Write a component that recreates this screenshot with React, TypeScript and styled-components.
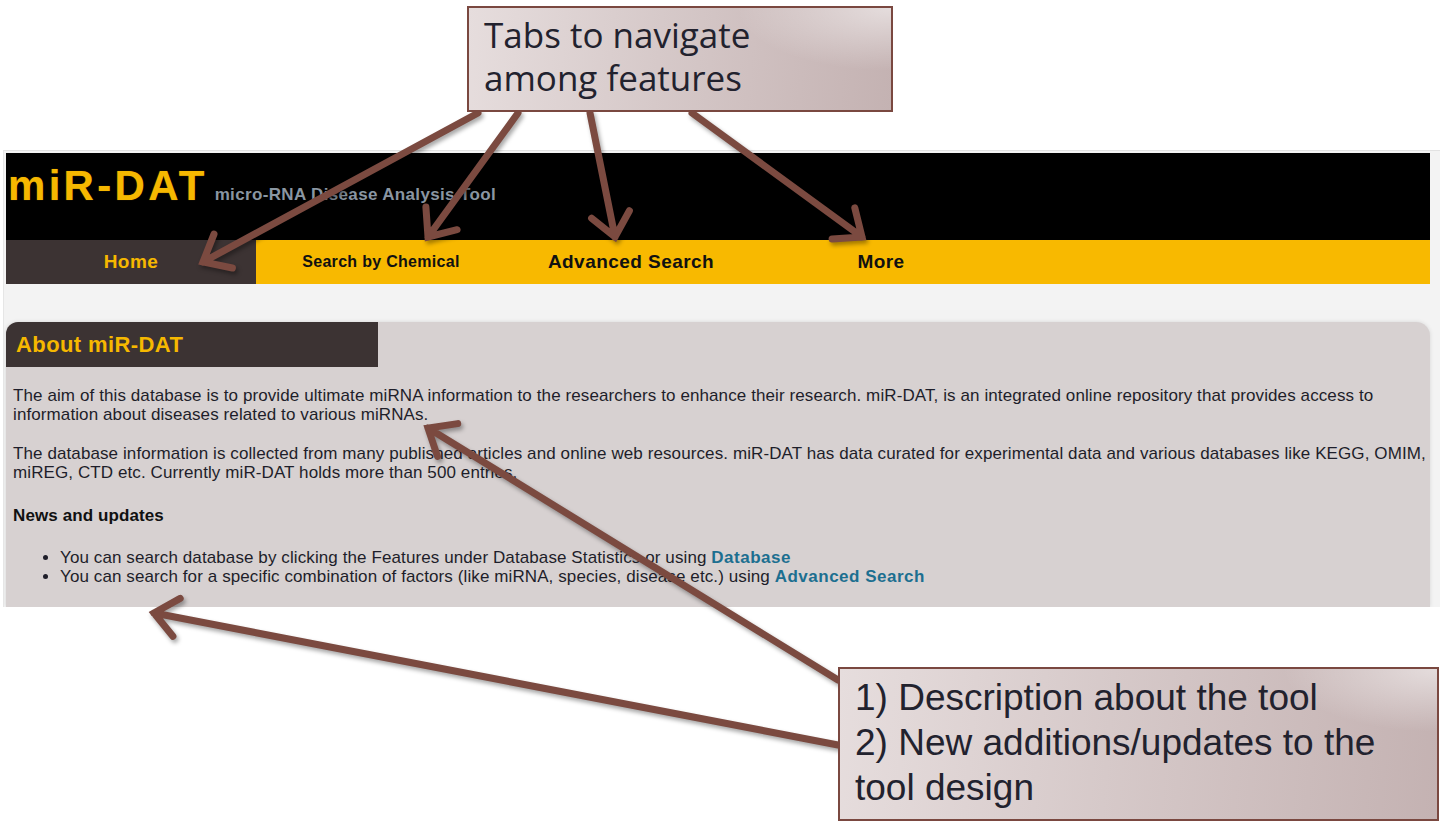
import React from "react";
import styled, { createGlobalStyle } from "styled-components";

const Global = createGlobalStyle`
  html, body { margin: 0; padding: 0; background: #ffffff; }
  body { font-family: "Liberation Sans", Arial, sans-serif; }
`;

const Page = styled.div`
  position: relative;
  width: 1440px;
  height: 822px;
  overflow: hidden;
  background: #ffffff;
  padding-top: 150px;
  box-sizing: border-box;
`;

const Shot = styled.div`
  margin-left: 3px;
  height: 457px;
  overflow: hidden;
  background: #f3f3f3;
  border-top: 1px solid #e2e2e2;
  border-left: 1px solid #e6e6e6;
  padding: 2px 10px 0 2px;
  box-sizing: border-box;
  display: flex;
  flex-direction: column;
`;

const Header = styled.header`
  height: 87px;
  background: #000000;
  display: flex;
  flex-direction: column;
  justify-content: flex-end;
  padding: 0 0 33px 2px;
  box-sizing: border-box;
`;

const Brand = styled.div`
  display: flex;
  align-items: baseline;
  gap: 7px;
`;

const Logo = styled.div`
  font-family: "Liberation Sans", Arial, sans-serif;
  font-weight: 700;
  font-size: 42px;
  letter-spacing: 3.3px;
  line-height: 1;
  color: #f6b800;
  text-shadow: 0 0 1px #7a5200;
`;

const Subtitle = styled.div`
  font-family: "Liberation Sans", Arial, sans-serif;
  font-weight: 700;
  font-size: 17px;
  letter-spacing: 0.35px;
  line-height: 1;
  color: #8a96a2;
`;

const Nav = styled.nav`
  height: 44px;
  background: #f8b900;
  display: flex;
`;

const Tab = styled.div<{ $active?: boolean; $small?: boolean }>`
  width: 250px;
  display: flex;
  align-items: center;
  justify-content: center;
  font-family: "Liberation Sans", Arial, sans-serif;
  font-weight: 700;
  font-size: ${(p) => (p.$small ? "16px" : "19px")};
  letter-spacing: ${(p) => (p.$small ? "0.3px" : "0.45px")};
  color: ${(p) => (p.$active ? "#f6b800" : "#111111")};
  background: ${(p) => (p.$active ? "#3c3333" : "transparent")};
`;

const Panel = styled.section`
  margin-top: 38px;
  flex: 1;
  background: #d7d1d1;
  border-radius: 12px 14px 0 0;
  box-shadow: 0 0 4px rgba(0, 0, 0, 0.12);
  font-size: 17px;
  letter-spacing: 0.1px;
  color: #1e1e2a;
`;

const PanelTitle = styled.h2`
  margin: 0;
  width: 372px;
  height: 45px;
  box-sizing: border-box;
  padding-left: 10px;
  display: flex;
  align-items: center;
  background: #3c3333;
  color: #f6b800;
  font-size: 22px;
  letter-spacing: 0.4px;
  font-weight: 700;
  border-radius: 12px 0 0 0;
`;

const PanelBody = styled.div`
  padding: 19px 3px 0 7px;
`;

const Para = styled.p`
  margin: 0 0 20px;
  line-height: 19px;
`;

const SubHead = styled.h4`
  margin: 24px 0 23px;
  font-size: 17px;
  line-height: 19px;
  font-weight: 700;
  color: #111;
`;

const List = styled.ul`
  margin: 0;
  padding-left: 47px;
  line-height: 19px;
`;

const Link = styled.a`
  color: #1c6f90;
  font-weight: 700;
  letter-spacing: 0.5px;
  text-decoration: none;
`;

const Callout = styled.div<{ $font: string; $size: number; $lh: number }>`
  position: absolute;
  box-sizing: border-box;
  border: 2px solid #7a4840;
  background:
    radial-gradient(ellipse 220px 90px at 100% 0%, rgba(255, 255, 255, 0.55), rgba(255, 255, 255, 0) 70%),
    linear-gradient(95deg, #e6dddd 0%, #d6c9c9 45%, #c4b2b2 100%);
  font-family: ${(p) => p.$font};
  font-size: ${(p) => p.$size}px;
  line-height: ${(p) => p.$lh}px;
  color: #22222e;
  white-space: nowrap;
`;

const Overlay = styled.svg`
  position: absolute;
  left: 0;
  top: 0;
  pointer-events: none;
  filter: drop-shadow(2px 3px 2px rgba(0, 0, 0, 0.35));
`;

type Arrow = [number, number, number, number];

const arrows: Arrow[] = [
  [478, 113, 203, 262],
  [518, 113, 428, 237],
  [590, 113, 615, 237],
  [692, 113, 862, 237],
  [838, 680, 428, 428],
  [838, 745, 154, 613],
];

function arrowPath([x1, y1, x2, y2]: Arrow): string {
  const ang = Math.atan2(y2 - y1, x2 - x1);
  const len = 30;
  const spread = (40 * Math.PI) / 180;
  const a1 = ang + Math.PI - spread;
  const a2 = ang + Math.PI + spread;
  const hx1 = x2 + len * Math.cos(a1);
  const hy1 = y2 + len * Math.sin(a1);
  const hx2 = x2 + len * Math.cos(a2);
  const hy2 = y2 + len * Math.sin(a2);
  return `M${x1} ${y1} L${x2} ${y2} M${hx1.toFixed(1)} ${hy1.toFixed(1)} L${x2} ${y2} L${hx2.toFixed(1)} ${hy2.toFixed(1)}`;
}

export default function App() {
  return (
    <>
      <Global />
      <Page>
        <Shot>
          <Header>
            <Brand>
              <Logo>miR-DAT</Logo>
              <Subtitle>micro-RNA Disease Analysis Tool</Subtitle>
            </Brand>
          </Header>
          <Nav>
            <Tab $active>Home</Tab>
            <Tab $small>Search by Chemical</Tab>
            <Tab>Advanced Search</Tab>
            <Tab>More</Tab>
          </Nav>
          <Panel>
            <PanelTitle>About miR-DAT</PanelTitle>
            <PanelBody>
              <Para>
                The aim of this database is to provide ultimate miRNA information to the researchers to enhance their
                research. miR-DAT, is an integrated online repository that provides access to information about diseases
                related to various miRNAs.
              </Para>
              <Para>
                The database information is collected from many published articles and online web resources. miR-DAT has
                data curated for experimental data and various databases like KEGG, OMIM, miREG, CTD etc. Currently
                miR-DAT holds more than 500 entries.
              </Para>
              <SubHead>News and updates</SubHead>
              <List>
                <li>
                  You can search database by clicking the Features under Database Statistics or using{" "}
                  <Link>Database</Link>
                </li>
                <li>
                  You can search for a specific combination of factors (like miRNA, species, disease etc.) using{" "}
                  <Link>Advanced Search</Link>
                </li>
              </List>
            </PanelBody>
          </Panel>
        </Shot>

        <Overlay width={1440} height={822} viewBox="0 0 1440 822">
          {arrows.map((a, i) => (
            <path
              key={i}
              d={arrowPath(a)}
              fill="none"
              stroke="#7b4a40"
              strokeWidth={7}
              strokeLinecap="round"
              strokeLinejoin="miter"
            />
          ))}
        </Overlay>

        <Callout
          $font={'"Open Sans", "Noto Sans", sans-serif'}
          $size={35}
          $lh={43}
          style={{ left: 467, top: 6, width: 426, height: 106, padding: "5px 0 0 15px" }}
        >
          Tabs to navigate
          <br />
          among features
        </Callout>

        <Callout
          $font={'"Liberation Sans", Arial, sans-serif'}
          $size={37}
          $lh={45}
          style={{ left: 838, top: 667, width: 601, height: 154, padding: "6px 0 0 15px" }}
        >
          1) Description about the tool
          <br />
          2) New additions/updates to the
          <br />
          tool design
        </Callout>
      </Page>
    </>
  );
}
